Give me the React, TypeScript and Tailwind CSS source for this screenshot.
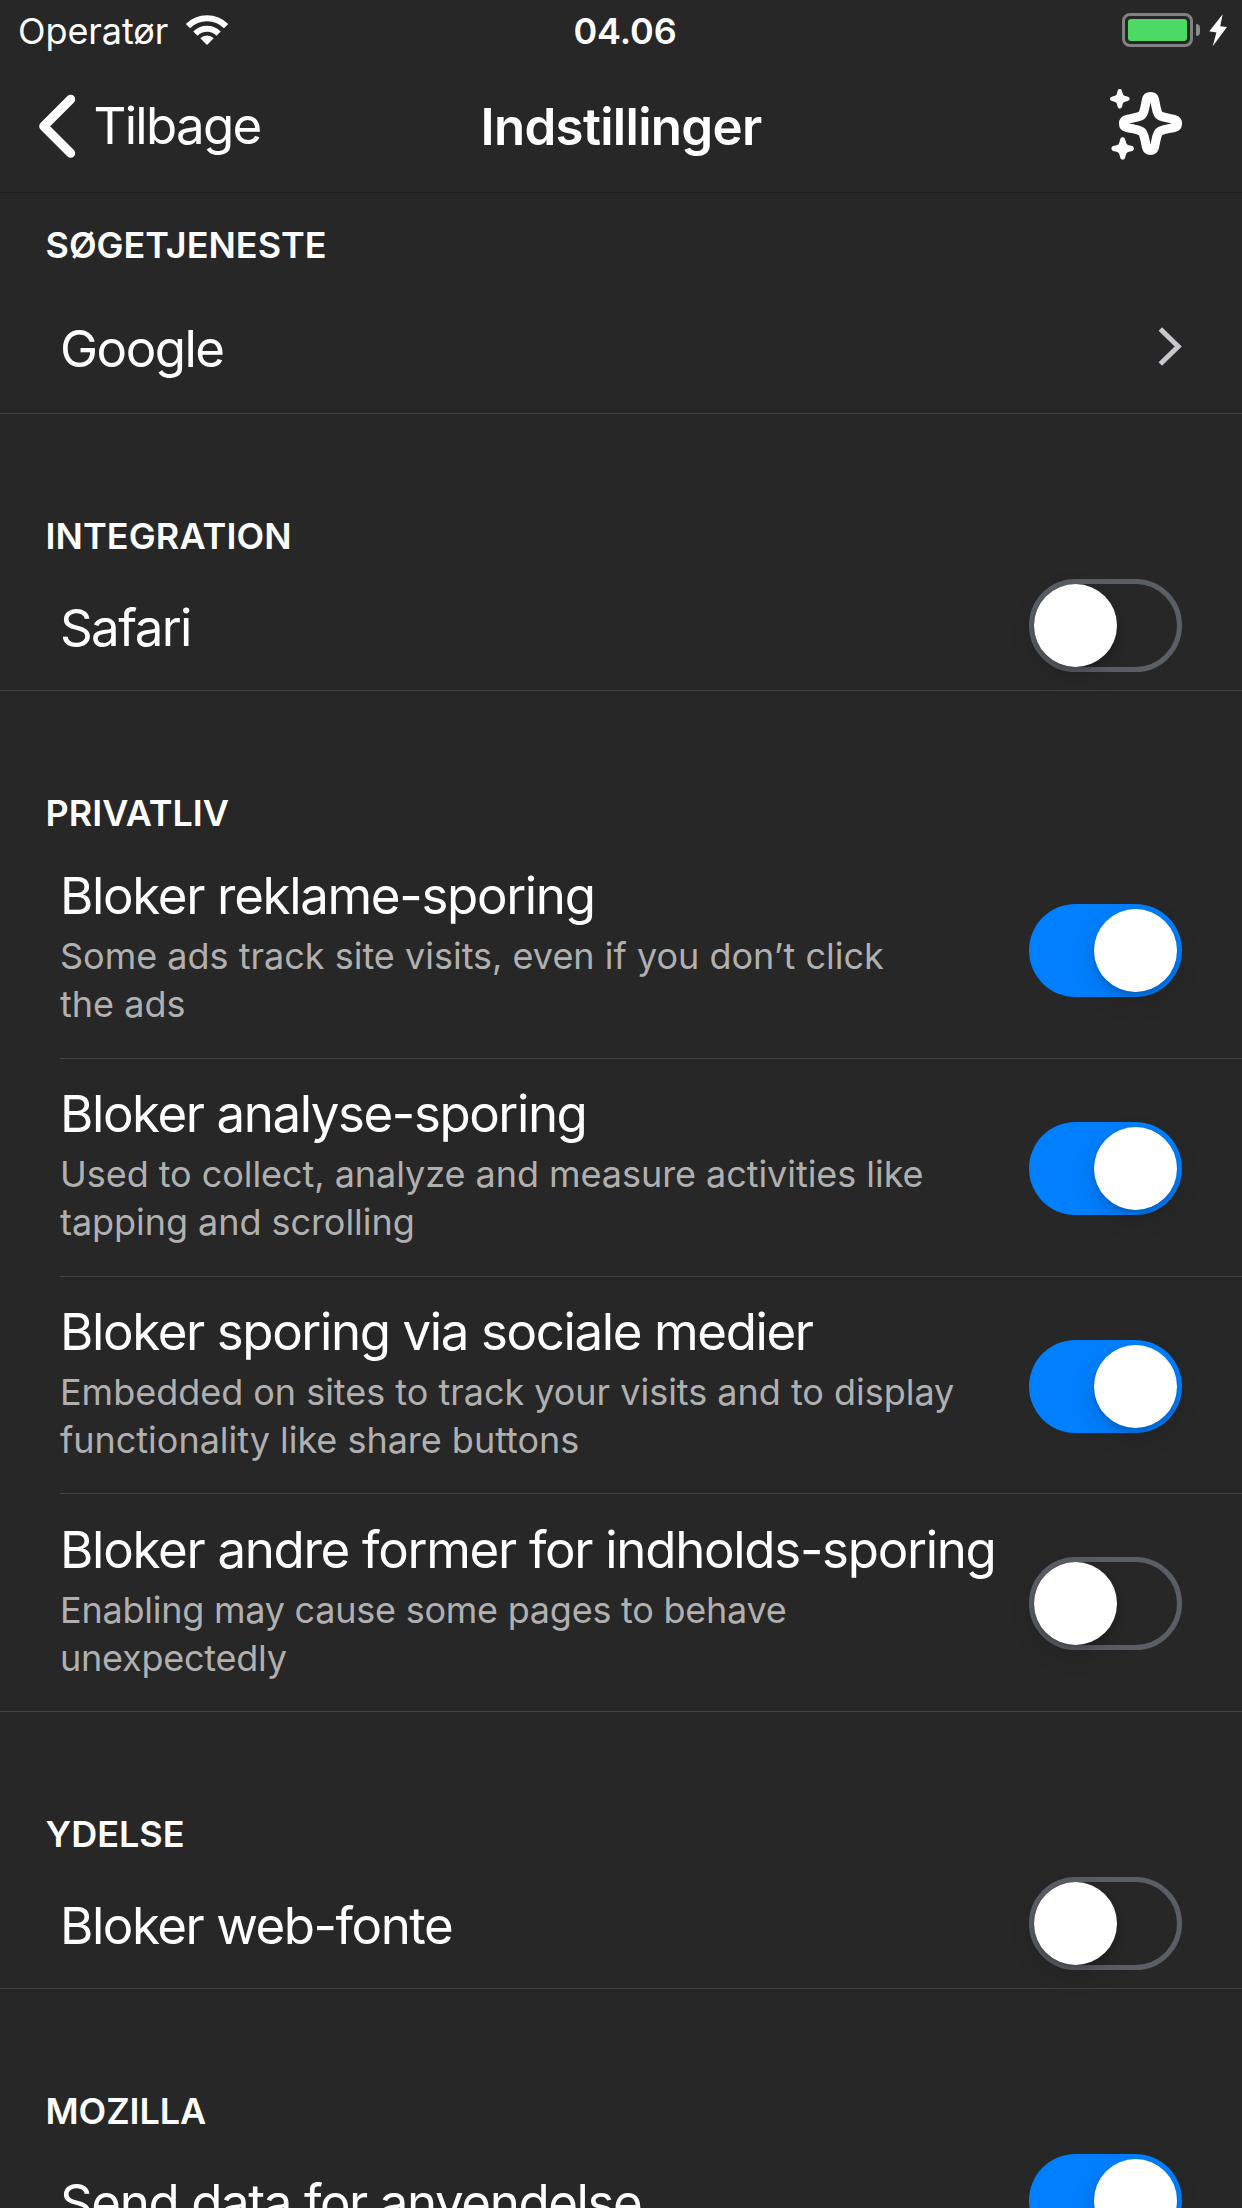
import React from "react";

const STAR =
  "M0-9.8C1.9-9.8 2.2-8.2 2.6-6.2C3.1-3.8 3.8-3.1 6.2-2.6C8.2-2.2 9.8-1.9 9.8 0C9.8 1.9 8.2 2.2 6.2 2.6C3.8 3.1 3.1 3.8 2.6 6.2C2.2 8.2 1.9 9.8 0 9.8C-1.9 9.8-2.2 8.2-2.6 6.2C-3.1 3.8-3.8 3.1-6.2 2.6C-8.2 2.2-9.8 1.9-9.8 0C-9.8-1.9-8.2-2.2-6.2-2.6C-3.8-3.1-3.1-3.8-2.6-6.2C-2.2-8.2-1.9-9.8 0-9.8Z";

function WifiIcon() {
  return (
    <svg className="block h-[34px] w-[46px]" viewBox="0 0 46 34" fill="none" stroke="#fff" strokeWidth="6">
      <path d="M3.9 13.1A27 27 0 0 1 42.1 13.1" />
      <path d="M11.4 20.6A16.4 16.4 0 0 1 34.6 20.6" />
      <path d="M23 32L16.3 25.3A9.4 9.4 0 0 1 29.7 25.3Z" fill="#fff" stroke="none" />
    </svg>
  );
}

function Battery() {
  return (
    <div className="flex items-center">
      <div className="h-[34px] w-[71px] rounded-[8px] border-3 border-[#828282] p-[3px]">
        <div className="h-full w-full rounded-[3px] bg-[#4cd964]" />
      </div>
      <div className="ml-[3px] h-3 w-1 rounded-r-full bg-[#8c8c8c]" />
      <svg className="ml-[9px] block h-[34px] w-[19px]" viewBox="0 0 19 34" fill="#fff">
        <path d="M13.7 1.3L0.3 18.3L7.4 19.4L3.7 33.3L18 14L11.2 13.2Z" />
      </svg>
    </div>
  );
}

function BackIcon() {
  return (
    <svg className="block h-[66px] w-[40px]" viewBox="0 0 40 66" fill="none" stroke="#fff" strokeWidth="9" strokeLinecap="round" strokeLinejoin="round">
      <path d="M34.7 6.2L7.7 33.2L34.7 60.2" />
    </svg>
  );
}

function SparkleIcon() {
  return (
    <svg className="block h-[80px] w-[80px]" viewBox="0 0 80 80" fill="#fff">
      <path d={STAR} transform="translate(12.8 14.8)" />
      <path d={STAR} transform="translate(15.7 64.4) scale(1.15)" />
      <path
        transform="translate(43.5 39.5)"
        d="M4-24C6-14 6.5-10.5 8.5-8.5C10.5-6.5 14-6 24-4C28-3 28 3 24 4C14 6 10.5 6.5 8.5 8.5C6.5 10.5 6 14 4 24C3 28-3 28-4 24C-6 14-6.5 10.5-8.5 8.5C-10.5 6.5-14 6-24 4C-28 3-28-3-24-4C-14-6-10.5-6.5-8.5-8.5C-6.5-10.5-6-14-4-24C-3-28 3-28 4-24Z"
        fill="none"
        stroke="#fff"
        strokeWidth="9"
        strokeLinejoin="round"
      />
    </svg>
  );
}

function Toggle({ on }: { on: boolean }) {
  return (
    <div
      className={
        on
          ? "flex h-[93px] w-[153px] shrink-0 justify-end rounded-full bg-[#007fff] p-[5px]"
          : "flex h-[93px] w-[153px] shrink-0 rounded-full border-5 border-[#595f65]"
      }
    >
      <div className="h-[83px] w-[83px] rounded-full bg-white shadow-[0_9px_24px_rgba(0,0,0,0.15),0_4px_5px_rgba(0,0,0,0.12)]" />
    </div>
  );
}

function SectionHeader({ children, track }: { children: string; track: string }) {
  return (
    <h2 className={`h-[50px] pl-[45.5px] text-[36px] leading-[44px] font-semibold ${track}`}>{children}</h2>
  );
}

const TITLE = "text-[51px] leading-[62px] whitespace-nowrap";

function ToggleRow({ title, on, track, last }: { title: string; on: boolean; track: string; last?: boolean }) {
  return (
    <div className={`flex justify-between pr-[60px] pl-[60px] ${last ? "h-[69px]" : "h-[127px] border-b border-[#434345]"}`}>
      <span className={`pt-[33px] ${TITLE} ${track}`}>{title}</span>
      <div className="pt-[15px]">
        <Toggle on={on} />
      </div>
    </div>
  );
}

type Blocker = { title: string; lines: [string, string]; on: boolean; track: string; desc: string; height: string };

const BLOCKERS: Blocker[] = [
  {
    title: "Bloker reklame-sporing",
    lines: ["Some ads track site visits, even if you don’t click", "the ads"],
    on: true,
    track: "tracking-[-1.33px]",
    desc: "tracking-[0px]",
    height: "h-[218px]",
  },
  {
    title: "Bloker analyse-sporing",
    lines: ["Used to collect, analyze and measure activities like", "tapping and scrolling"],
    on: true,
    track: "tracking-[-1.42px]",
    desc: "tracking-[-0.05px]",
    height: "h-[218px]",
  },
  {
    title: "Bloker sporing via sociale medier",
    lines: ["Embedded on sites to track your visits and to display", "functionality like share buttons"],
    on: true,
    track: "tracking-[-1.38px]",
    desc: "tracking-[-0.02px]",
    height: "h-[217px]",
  },
  {
    title: "Bloker andre former for indholds-sporing",
    lines: ["Enabling may cause some pages to behave", "unexpectedly"],
    on: false,
    track: "tracking-[-1.29px]",
    desc: "tracking-[-0.24px]",
    height: "h-[217px]",
  },
];

function BlockerRow({ item, last }: { item: Blocker; last: boolean }) {
  return (
    <div className={last ? "border-b border-[#434345] pl-[60px]" : "pl-[60px]"}>
      <div className={`flex justify-between pr-[60px] ${item.height} ${last ? "" : "border-b border-[#434345]"}`}>
        <div className={last ? "pt-[25px]" : "pt-[24px]"}>
          <div className={`${TITLE} ${item.track}`}>{item.title}</div>
          <p className={`mt-[5px] text-[36px] leading-[48px] whitespace-nowrap text-[#b0b0b0] ${item.desc}`}>
            {item.lines[0]}
            <br />
            {item.lines[1]}
          </p>
        </div>
        <div className="-ml-20 pt-[63px]">
          <Toggle on={item.on} />
        </div>
      </div>
    </div>
  );
}

export default function App() {
  return (
    <div className="h-[2208px] w-[1242px] overflow-hidden bg-[#272727] font-['Inter',sans-serif] text-white">
      <div className="grid h-[60px] grid-cols-[1fr_auto_1fr] text-[36px] leading-[44px]">
        <div className="flex pt-[9px] pl-[18px]">
          <span className="tracking-[-0.09px]">Operatør</span>
          <span className="ml-[16px] pt-[4px]">
            <WifiIcon />
          </span>
        </div>
        <span className="pt-[9px] pl-[8px] font-semibold tracking-[-0.11px]">04.06</span>
        <div className="flex items-start justify-end pt-[13px] pr-[14px]">
          <Battery />
        </div>
      </div>

      <div className="grid h-[133px] grid-cols-[1fr_auto_1fr] border-b border-[#1b1b1b]">
        <div className="flex items-start pl-[36px]">
          <span className="pt-[33px]">
            <BackIcon />
          </span>
          <span className="ml-[17.5px] pt-[35px] text-[51px] leading-[62px] tracking-[-1.7px]">Tilbage</span>
        </div>
        <h1 className="pt-[36px] text-[51px] leading-[62px] font-semibold tracking-[-0.7px]">Indstillinger</h1>
        <div className="flex justify-end pt-[24px] pr-[55px]">
          <SparkleIcon />
        </div>
      </div>

      <section className="pt-[30px]">
        <SectionHeader track="tracking-[0px]">SØGETJENESTE</SectionHeader>
        <div className="flex h-[141px] justify-between border-b border-[#434345] pr-[60px] pl-[60px]">
          <span className={`pt-[45px] tracking-[-1.5px] ${TITLE}`}>Google</span>
          <svg className="mt-[53px] block h-[42px] w-[24px]" viewBox="0 0 24 42" fill="none" stroke="#c7c6cc" strokeWidth="5">
            <path d="M2.3 3L20.2 20.5L2.3 38" />
          </svg>
        </div>
      </section>

      <section className="pt-[100px]">
        <SectionHeader track="tracking-[0.1px]">INTEGRATION</SectionHeader>
        <ToggleRow title="Safari" on={false} track="tracking-[-1.6px]" />
      </section>

      <section className="pt-[100px]">
        <SectionHeader track="tracking-[0px]">PRIVATLIV</SectionHeader>
        {BLOCKERS.map((item, i) => (
          <BlockerRow key={item.title} item={item} last={i === BLOCKERS.length - 1} />
        ))}
      </section>

      <section className="pt-[100px]">
        <SectionHeader track="tracking-[0px]">YDELSE</SectionHeader>
        <ToggleRow title="Bloker web-fonte" on={false} track="tracking-[-1.46px]" />
      </section>

      <section className="pt-[100px]">
        <SectionHeader track="tracking-[-0.1px]">MOZILLA</SectionHeader>
        <ToggleRow title="Send data for anvendelse" on track="tracking-[-1.4px]" last />
      </section>
    </div>
  );
}
